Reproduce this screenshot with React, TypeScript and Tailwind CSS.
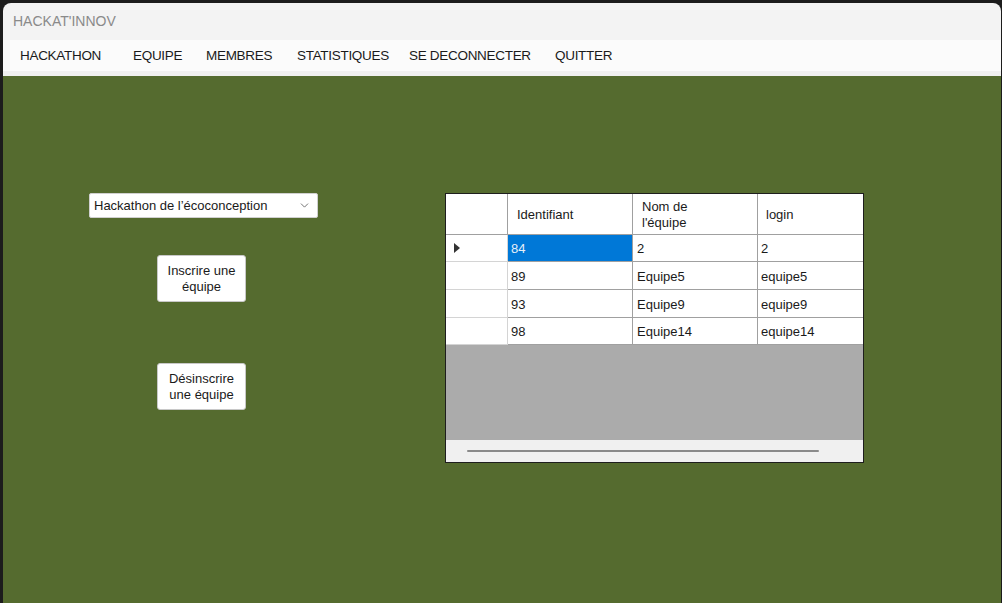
import {ChevronDown} from "lucide-react";

const MENU = [
  {label: "HACKATHON", w: "w-[113px]"},
  {label: "EQUIPE", w: "w-[73px]"},
  {label: "MEMBRES", w: "w-[91px]"},
  {label: "STATISTIQUES", w: "w-[112px]"},
  {label: "SE DECONNECTER", w: "w-[146px]"},
  {label: "QUITTER", w: "w-[80px]"},
];

const ROWS = [
  {id: "84", nom: "2", login: "2"},
  {id: "89", nom: "Equipe5", login: "equipe5"},
  {id: "93", nom: "Equipe9", login: "equipe9"},
  {id: "98", nom: "Equipe14", login: "equipe14"},
];

function WinButton({lines}: { lines: string[] }) {
  return (
      <button
          className="w-[89px] h-[47px] bg-white border border-[#c8c8c8] rounded-[3px] text-[13px] leading-[16px] text-[#1a1a1a] flex flex-col items-center justify-center pt-[1px]">
        {lines.map(l => <span key={l}>{l}</span>)}
      </button>
  );
}

function TeamGrid() {
  return (
      <div className="w-[419px] h-[270px] border border-[#1e1e1e] bg-[#ababab] flex flex-col text-[13px] text-[#1a1a1a]">
        {/* header */}
        <div className="flex h-[41px] bg-white">
          <div className="w-[62px] border-r border-b border-[#a0a0a0]"/>
          <div className="w-[125px] border-r border-b border-[#a0a0a0] pl-[9px] pt-[2px] flex items-center">Identifiant</div>
          <div className="w-[125px] border-r border-b border-[#a0a0a0] pl-[9px] pt-[2px] flex items-center leading-[16px]">
            <span>Nom de<br/>l'équipe</span>
          </div>
          <div className="flex-1 border-b border-[#a0a0a0] pl-[8px] pt-[2px] flex items-center">login</div>
        </div>
        {ROWS.map((r, i) => (
            <div key={r.id} className={`flex ${i === 0 || i === 3 ? "h-[27px]" : "h-[28px]"} bg-white`}>
              <div className="w-[62px] border-r border-b border-[#d4d4d4] flex items-center pl-[8px]">
                {i === 0 && (
                    <svg width="6" height="10" viewBox="0 0 6 10">
                      <path d="M0 0 L6 5 L0 10 Z" fill="#333"/>
                    </svg>
                )}
              </div>
              <div
                  className={`w-[125px] border-r border-b border-[#a0a0a0] pl-[3px] pt-[2px] flex items-center ${i === 0 ? "bg-[#0078d7] text-[#e6eef8]" : ""}`}>
                {r.id}
              </div>
              <div className="w-[125px] border-r border-b border-[#a0a0a0] pl-[4px] pt-[2px] flex items-center">{r.nom}</div>
              <div className="flex-1 border-b border-[#a0a0a0] pl-[3px] pt-[2px] flex items-center">{r.login}</div>
            </div>
        ))}
        <div className="flex-1"/>
        <div className="h-[22px] bg-[#f0f0f0] flex items-center pl-[21px]">
          <div className="w-[352px] h-[2px] rounded bg-[#8a8a8a]"/>
        </div>
      </div>
  );
}

export default function App() {
  return (
      <div className="w-[1002px] h-[603px] bg-[#1c1c1c] pt-[3px] pl-[3px] overflow-hidden"
           style={{fontFamily: '"Liberation Sans", Arial, sans-serif'}}>
        <div className="w-[998px] h-[600px] rounded-t-[8px] overflow-hidden flex flex-col">
          <div className="h-[37px] bg-[#f3f3f3] pl-[10px] flex items-center text-[14px] text-[#8a8a8a]">
            HACKAT'INNOV
          </div>
          <div className="h-[36px] bg-[#fbfbfb] border-b-[5px] border-[#f0f0f0] flex items-center pl-[17px] pt-[1px]">
            {MENU.map(m => (
                <span key={m.label} className={`${m.w} text-[13.5px] tracking-[-0.3px] text-[#1a1a1a] shrink-0`}>{m.label}</span>
            ))}
          </div>
          <div className="flex-1 bg-[#556b2f] flex items-start pt-[117px] pl-[86px]">
            <div className="w-[229px] flex flex-col">
              <div
                  className="h-[25px] bg-white border border-[#d0d0d0] rounded-[2px] flex items-center justify-between pl-[4px] pr-[6px] text-[13px] text-[#1a1a1a]">
                <span>Hackathon de l’écoconception</span>
                <ChevronDown size={13} strokeWidth={1.5} color="#555"/>
              </div>
              <div className="ml-[68px] mt-[37px]">
                <WinButton lines={["Inscrire une", "équipe"]}/>
              </div>
              <div className="ml-[68px] mt-[61px]">
                <WinButton lines={["Désinscrire", "une équipe"]}/>
              </div>
            </div>
            <div className="ml-[127px]">
              <TeamGrid/>
            </div>
          </div>
        </div>
      </div>
  );
}
